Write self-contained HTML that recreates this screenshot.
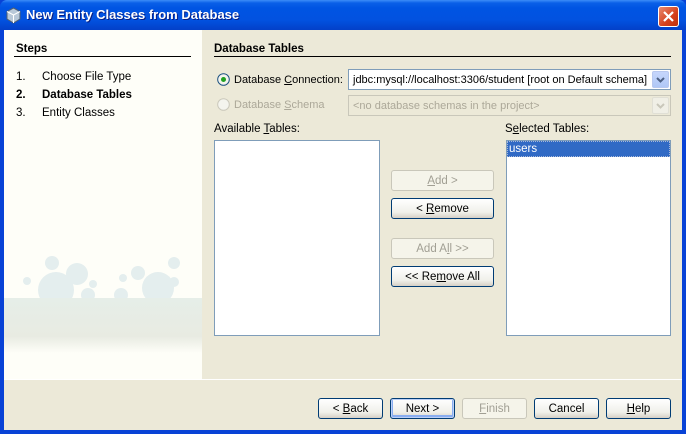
<!DOCTYPE html>
<html><head><style>
*{margin:0;padding:0;box-sizing:border-box}
body{width:686px;height:434px;overflow:hidden;font-family:"Liberation Sans",sans-serif;font-size:11.5px;color:#000;background:#0842d6;position:relative}
.a{position:absolute;white-space:nowrap}
.title{left:0;top:0;width:686px;height:30px;border-radius:7px 7px 0 0;background:linear-gradient(#3c8cf8 0,#0a5fe8 3px,#0054e3 8px,#0252e0 20px,#0340c8 30px)}
.title span{position:absolute;left:26px;top:7px;color:#fff;font-weight:bold;font-size:13px;font-family:"Liberation Sans",sans-serif;text-shadow:1px 1px #0a1e80}
.close{left:658px;top:6px;width:21px;height:21px;border:1px solid #fff;border-radius:3px;background:linear-gradient(135deg,#e88a70,#d5401c 60%,#c0300c)}
.body{left:4px;top:30px;width:678px;height:400px;background:#ece9d8}
.left{left:4px;top:30px;width:198px;height:349px;background:#fefef8;overflow:hidden}
.sep{left:4px;top:379px;width:678px;height:1px;background:#444;border-bottom:1px solid #fff}
.btn{position:absolute;height:21px;border:1px solid #003c74;border-radius:3px;background:linear-gradient(#fff,#f0f0ea 70%,#d6d0c5);text-align:center;line-height:20px;white-space:nowrap}
.dis{border-color:#c9c7ba;color:#a19f94;background:#f5f4ea}
.list{position:absolute;background:#fff;border:1px solid #7f9db9}
u{text-decoration:underline}
</style></head><body>
<div class="a title"><span>New Entity Classes from Database</span>
<svg class="a" style="left:5px;top:7px" width="17" height="17" viewBox="0 0 17 17"><path d="M8.5 1 L15 4.5 V12 L8.5 16 L2 12 V4.5Z" fill="#b8c8d8" stroke="#506070"/><path d="M2 4.5 L8.5 8 L15 4.5 M8.5 8 V16" fill="none" stroke="#fff"/></svg>
</div>
<div class="a close"><svg width="19" height="19"><path d="M5 5L14 14M14 5L5 14" stroke="#fff" stroke-width="2.2"/></svg></div>
<div class="a body"></div>
<div class="a left">
<svg width="198" height="349" style="position:absolute;left:0;top:0">
<defs><linearGradient id="g" x1="0" y1="0" x2="0" y2="1"><stop offset="0" stop-color="#e6eee8"/><stop offset=".7" stop-color="#e8ebe2"/><stop offset="1" stop-color="#fefef8"/></linearGradient></defs>
<g fill="#e4eeee">
<circle cx="48" cy="233" r="7"/><circle cx="73" cy="244" r="11"/><circle cx="52" cy="260" r="18"/><circle cx="23" cy="251" r="4"/><circle cx="170" cy="233" r="6"/><circle cx="154" cy="258" r="16"/><circle cx="134" cy="243" r="7"/><circle cx="119" cy="248" r="4"/><circle cx="89" cy="254" r="4"/><circle cx="84" cy="265" r="7"/><circle cx="117" cy="265" r="7"/><circle cx="170" cy="252" r="5"/>
</g>
<rect x="0" y="268" width="198" height="55" fill="url(#g)"/>
</svg>
<div class="a" style="left:12px;top:13px;font-weight:bold">Steps</div>
<div class="a" style="left:10px;top:26px;width:177px;height:1px;background:#000"></div>
<div class="a" style="left:12px;top:41px">1.</div><div class="a" style="left:38px;top:41px">Choose File Type</div>
<div class="a" style="left:12px;top:59px;font-weight:bold">2.</div><div class="a" style="left:38px;top:59px;font-weight:bold">Database Tables</div>
<div class="a" style="left:12px;top:77px">3.</div><div class="a" style="left:38px;top:77px">Entity Classes</div>
</div>
<div class="a" style="left:214px;top:43px;font-weight:bold">Database Tables</div>
<div class="a" style="left:214px;top:56px;width:457px;height:1px;background:#000"></div>
<svg class="a" style="left:217px;top:73px" width="13" height="13"><circle cx="6.5" cy="6.5" r="5.8" fill="#f4f4ee" stroke="#1c5180"/><circle cx="6.5" cy="6.5" r="2.5" fill="#21a121"/></svg>
<div class="a" style="left:234px;top:74px;font-size:11px">Database <u>C</u>onnection:</div>
<div class="a" style="left:348px;top:69px;width:323px;height:21px;background:#fff;border:1px solid #7f9db9;overflow:hidden"><span style="position:absolute;left:4px;top:4px;font-size:11px">jdbc:mysql://localhost:3306/student [root on Default schema]</span>
<div class="a" style="right:1px;top:1px;width:17px;height:17px;border-radius:2px;background:linear-gradient(#c6d6fc,#b0c8f6);border:1px solid #b8c8ef"><svg width="15" height="15"><path d="M4 6l3.5 3.5L11 6" stroke="#4d6185" stroke-width="2" fill="none"/></svg></div></div>
<svg class="a" style="left:217px;top:98px" width="13" height="13"><circle cx="6.5" cy="6.5" r="5.8" fill="#f4f4ee" stroke="#cac8bb"/></svg>
<div class="a" style="left:234px;top:99px;color:#aca899;font-size:11px">Database <u>S</u>chema</div>
<div class="a" style="left:348px;top:95px;width:323px;height:21px;background:#ece9d8;border:1px solid #c9c7ba;color:#aca899"><span style="position:absolute;left:4px;top:4px;font-size:11px">&lt;no database schemas in the project&gt;</span>
<div class="a" style="right:1px;top:1px;width:17px;height:17px;border-radius:2px;background:#f0efe6;border:1px solid #e0dfd5"><svg width="15" height="15"><path d="M4 6l3.5 3.5L11 6" stroke="#c9c7ba" stroke-width="2" fill="none"/></svg></div></div>
<div class="a" style="left:214px;top:123px">Available <u>T</u>ables:</div>
<div class="a" style="left:505px;top:123px">S<u>e</u>lected Tables:</div>
<div class="list" style="left:214px;top:140px;width:166px;height:196px"></div>
<div class="list" style="left:506px;top:140px;width:165px;height:196px"><div style="margin:0;height:16px;background:#316ac5;color:#fff;border:1px dotted #a8b8d8;padding-left:1px;line-height:15px">users</div></div>
<div class="btn dis" style="left:391px;top:170px;width:103px"><u>A</u>dd &gt;</div>
<div class="btn" style="left:391px;top:198px;width:103px">&lt; <u>R</u>emove</div>
<div class="btn dis" style="left:391px;top:238px;width:103px">Add A<u>l</u>l &gt;&gt;</div>
<div class="btn" style="left:391px;top:266px;width:103px">&lt;&lt; Re<u>m</u>ove All</div>
<div class="a sep"></div>
<div class="btn" style="left:318px;top:398px;width:65px">&lt; <u>B</u>ack</div>
<div class="btn" style="left:390px;top:398px;width:65px;box-shadow:inset 0 0 0 1px #bcd0f6,inset 0 -1px 0 2px #89adf0">Next &gt;</div>
<div class="btn dis" style="left:462px;top:398px;width:65px"><u>F</u>inish</div>
<div class="btn" style="left:534px;top:398px;width:65px">Cancel</div>
<div class="btn" style="left:606px;top:398px;width:65px"><u>H</u>elp</div>
</body></html>
